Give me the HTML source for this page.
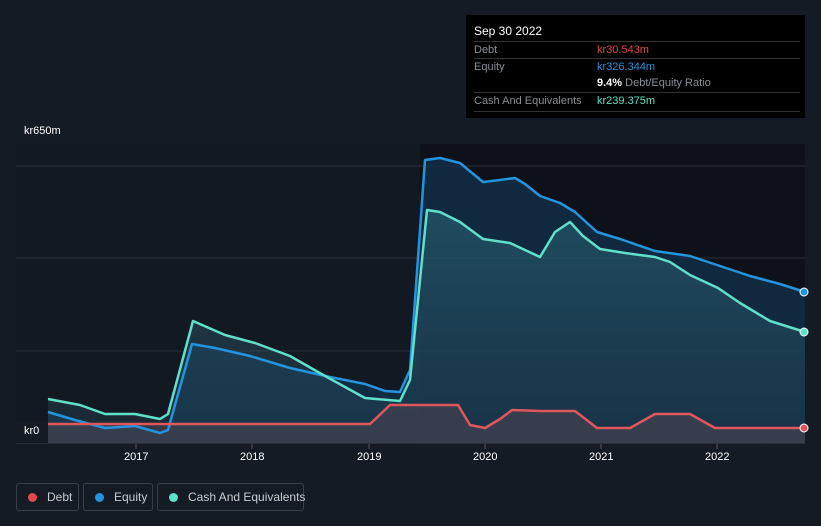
<!DOCTYPE html><html><head><style>
body{margin:0;width:821px;height:526px;background:#151b24;font-family:"Liberation Sans",sans-serif;overflow:hidden;position:relative}
.t{position:absolute;font-size:11px;color:#fff}
.tip{position:absolute;left:466px;top:15px;width:339px;height:103px;background:#000;font-size:11px}
.r{position:absolute;left:8px;width:326px;border-top:1px solid #333;color:#8a8f96;height:18px;line-height:17px}
.r span{position:absolute;left:123px}
.lg{position:absolute;top:483px;height:26px;border:1px solid #3a3f47;border-radius:3px;color:#c8ccd1;font-size:12px;line-height:26px;white-space:nowrap;box-sizing:border-box;height:28px}
.lg i{display:inline-block;width:9px;height:9px;border-radius:50%;margin:0 10px 0 11px;vertical-align:-1px}
</style></head><body>
<svg width="821" height="526" style="position:absolute;left:0;top:0">
<defs><linearGradient id="g" x1="0" y1="0" x2="0" y2="1"><stop offset="0" stop-color="#2c6a7a" stop-opacity=".55"/><stop offset="1" stop-color="#2c4a5a" stop-opacity=".3"/></linearGradient></defs>
<rect x="16" y="144" width="789" height="300" fill="#131922"/>
<rect x="420" y="144" width="385" height="300" fill="#0e1218"/>
<g stroke="#2a2f38" stroke-width="1"><line x1="16" y1="166" x2="805" y2="166"/><line x1="16" y1="258" x2="805" y2="258"/><line x1="16" y1="351" x2="805" y2="351"/><line x1="16" y1="443.5" x2="805" y2="443.5"/></g>
<path d="M48,412 L75,420 105,428 135,426 160,433 168,430 192,344 215,348 250,356 290,368 330,377 365,384 385,391 400,392 410,370 425,160 440,158 460,163 483,182 500,180 515,178 525,184 540,196 560,203 575,212 597,232 620,239 655,251 690,256 720,266 750,276 780,284 805,292 L805,443 48,443Z" fill="#12304a" opacity=".8"/>
<path d="M48,399 L80,405 105,414 135,414 160,419 168,414 193,321 225,335 255,343 290,356 325,376 365,398 400,401 410,380 427,210 440,212 460,222 483,239 510,243 540,257 555,232 570,222 583,236 600,249 625,253 655,257 670,262 690,275 718,288 740,303 770,321 805,332 L805,443 48,443Z" fill="url(#g)"/>
<path d="M48,424 L370,424 390,405 458,405 470,425 485,428 500,419 512,410 540,411 575,411 597,428 630,428 655,414 690,414 715,428 805,428 L805,443 48,443Z" fill="#4a4450" opacity=".6"/>
<path d="M48,412 L75,420 105,428 135,426 160,433 168,430 192,344 215,348 250,356 290,368 330,377 365,384 385,391 400,392 410,370 425,160 440,158 460,163 483,182 500,180 515,178 525,184 540,196 560,203 575,212 597,232 620,239 655,251 690,256 720,266 750,276 780,284 805,292" fill="none" stroke="#2394df" stroke-width="2.5" stroke-linejoin="round"/>
<path d="M48,399 L80,405 105,414 135,414 160,419 168,414 193,321 225,335 255,343 290,356 325,376 365,398 400,401 410,380 427,210 440,212 460,222 483,239 510,243 540,257 555,232 570,222 583,236 600,249 625,253 655,257 670,262 690,275 718,288 740,303 770,321 805,332" fill="none" stroke="#5fe0c9" stroke-width="2.5" stroke-linejoin="round"/>
<path d="M48,424 L370,424 390,405 458,405 470,425 485,428 500,419 512,410 540,411 575,411 597,428 630,428 655,414 690,414 715,428 805,428" fill="none" stroke="#e0575b" stroke-width="2.5" stroke-linejoin="round"/>
<circle cx="804" cy="292" r="4" fill="#2394df" stroke="#fff"/><circle cx="804" cy="332" r="4" fill="#5fe0c9" stroke="#fff"/><circle cx="804" cy="428" r="4" fill="#e0575b" stroke="#fff"/>
<g stroke="#555" ><line x1="136" y1="444" x2="136" y2="449"/><line x1="252" y1="444" x2="252" y2="449"/><line x1="369" y1="444" x2="369" y2="449"/><line x1="485" y1="444" x2="485" y2="449"/><line x1="601" y1="444" x2="601" y2="449"/><line x1="717" y1="444" x2="717" y2="449"/></g>
<rect x="16" y="422" width="32" height="20" fill="#151b24"/>
</svg>
<div class="t" style="left:24px;top:125px">kr650m</div>
<div class="t" style="left:24px;top:425px">kr0</div>
<div class="t" style="left:124px;top:451px">2017</div><div class="t" style="left:240px;top:451px">2018</div><div class="t" style="left:357px;top:451px">2019</div><div class="t" style="left:473px;top:451px">2020</div><div class="t" style="left:589px;top:451px">2021</div><div class="t" style="left:705px;top:451px">2022</div>
<div class="tip">
<div style="position:absolute;left:8px;top:9px;color:#fff;font-size:12px">Sep 30 2022</div>
<div class="r" style="top:26px">Debt<span style="color:#e0484c">kr30.543m</span></div>
<div class="r" style="top:43px">Equity<span style="color:#2394df">kr326.344m</span></div>
<div class="r" style="top:60px;border:none"><span style="color:#8a8f96"><b style="color:#fff">9.4%</b> Debt/Equity Ratio</span></div>
<div class="r" style="top:77px;border-bottom:1px solid #333">Cash And Equivalents<span style="color:#5fe0c9">kr239.375m</span></div>
</div>
<div class="lg" style="left:16px;width:63px"><i style="background:#e0484c"></i>Debt</div>
<div class="lg" style="left:83px;width:70px"><i style="background:#2394df"></i>Equity</div>
<div class="lg" style="left:157px;width:147px"><i style="background:#5fe0c9"></i>Cash And Equivalents</div>
</body></html>
